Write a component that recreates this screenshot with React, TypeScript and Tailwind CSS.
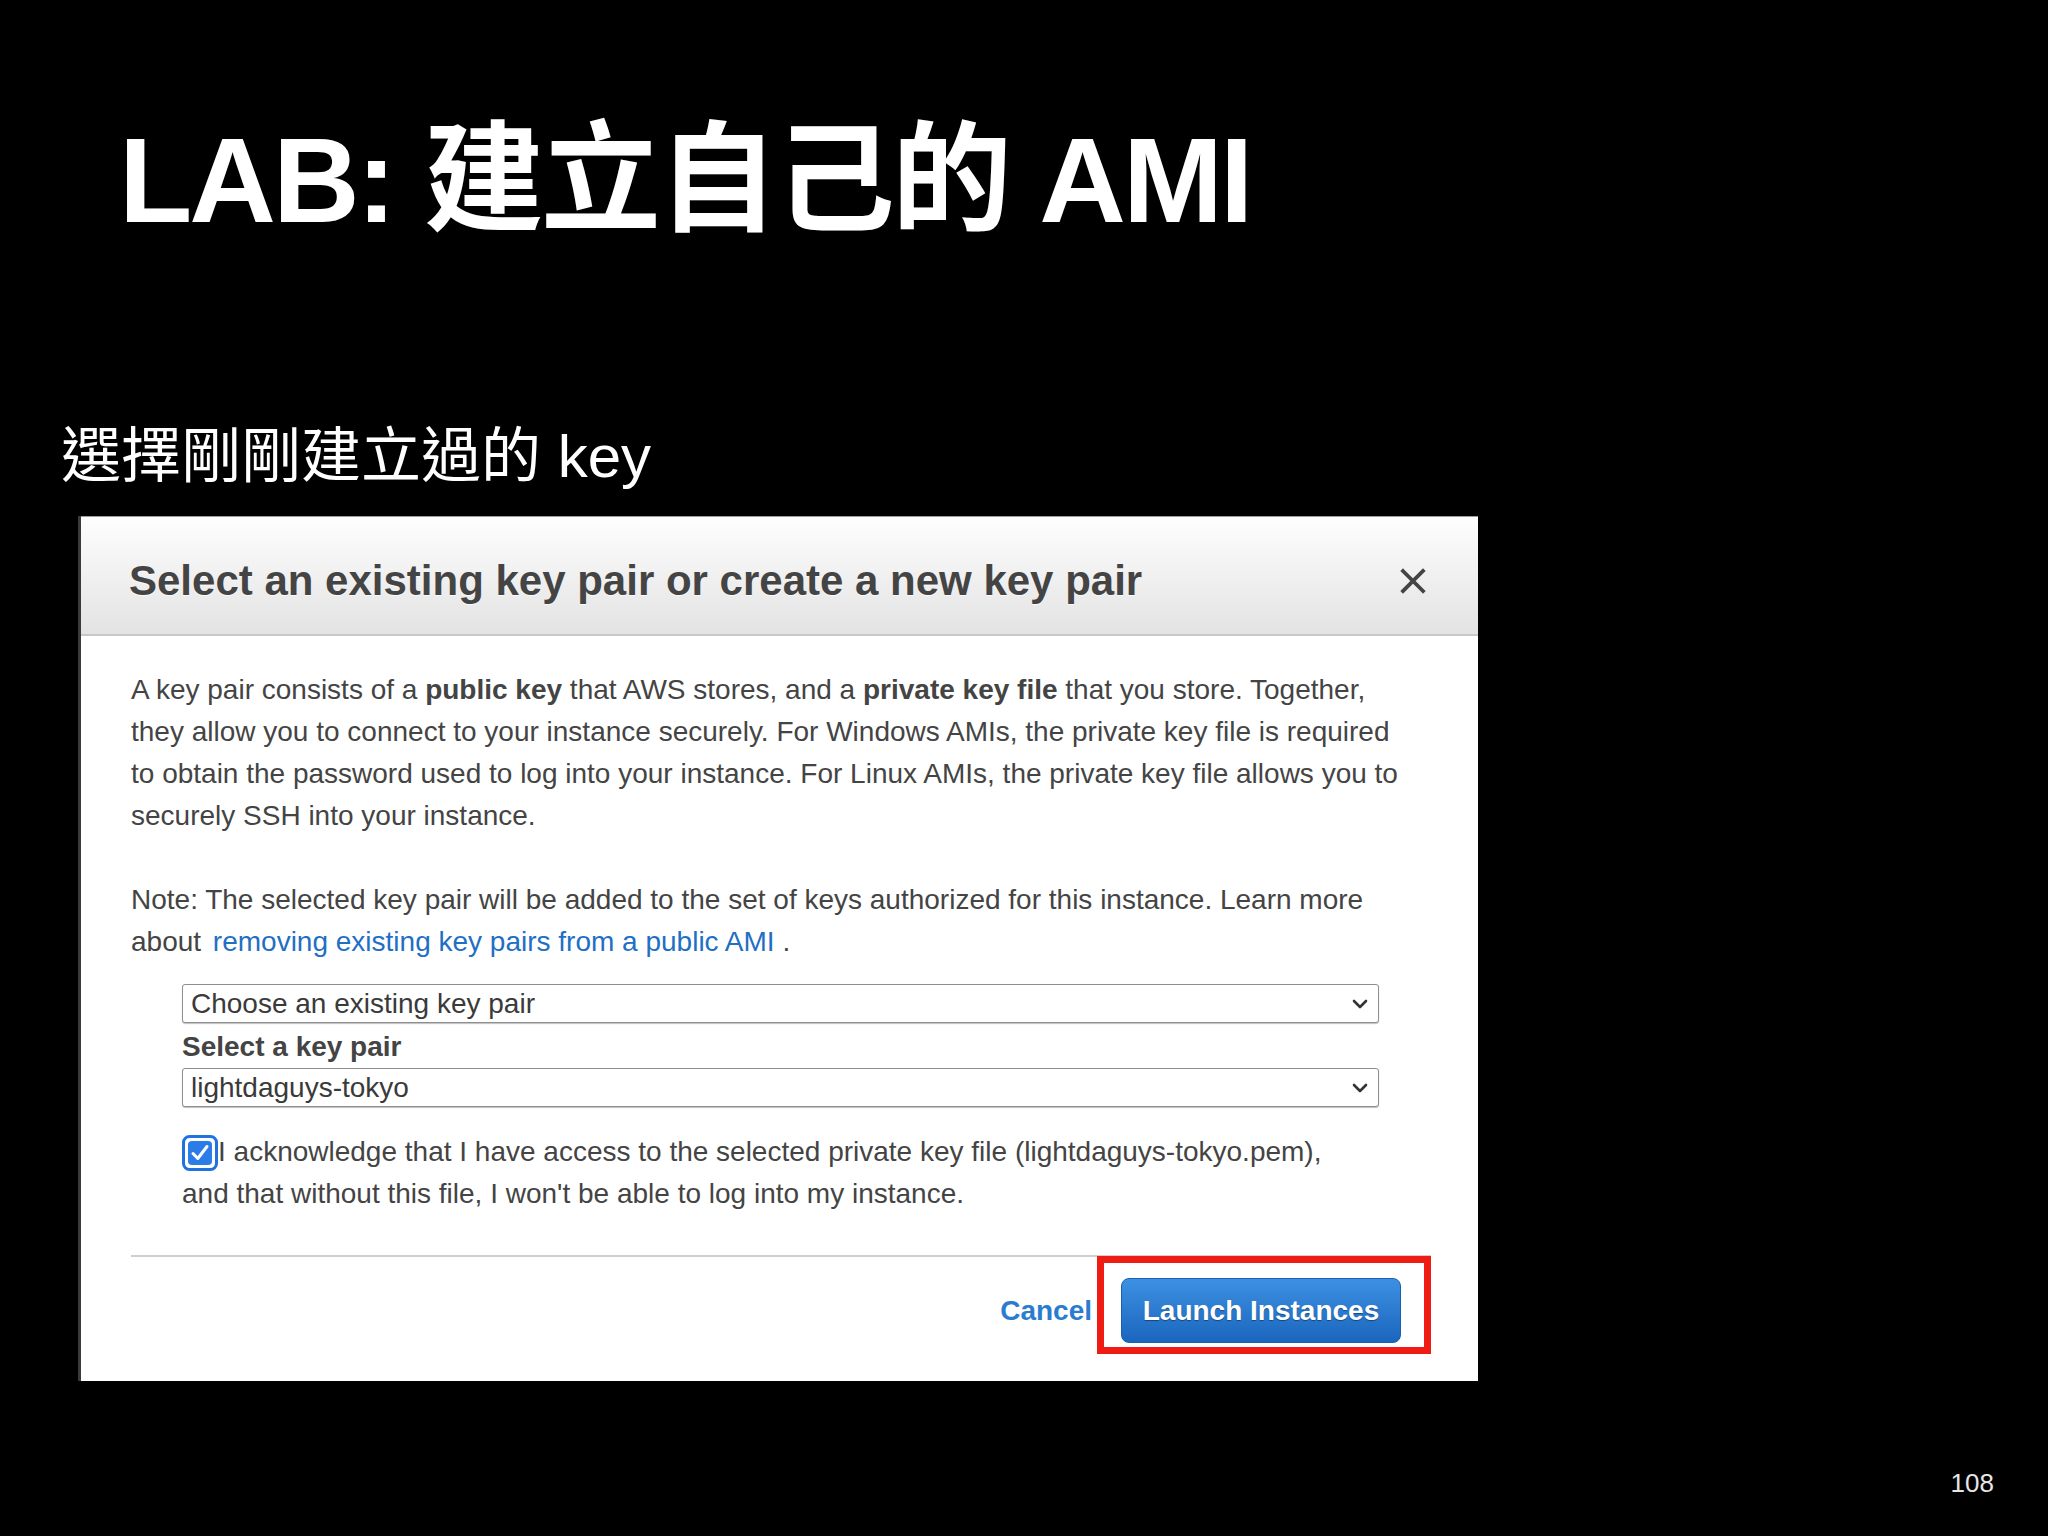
import React from 'react'

const sans = { fontFamily: '"Liberation Sans", "Noto Sans CJK TC", Arial, sans-serif' }

const Chevron = () => (
  <svg width="18" height="12" viewBox="0 0 18 12" className="shrink-0">
    <polyline points="3,3 9,9 15,3" fill="none" stroke="#333" strokeWidth="2.6" strokeLinecap="round" strokeLinejoin="round" />
  </svg>
)

const FakeSelect = ({ value }: { value: string }) => (
  <div className="flex h-[39px] items-center justify-between rounded-[3px] border border-[#8e8e8e] bg-white pl-[8px] pr-[9px] shadow-[0_1px_1px_rgba(0,0,0,0.25)]">
    <span className="text-[28px] leading-none text-[#3a3a3a]">{value}</span>
    <Chevron />
  </div>
)

const CheckBox = () => (
  <svg width="36" height="36" viewBox="0 0 36 36" className="inline-block align-[-10px]">
    <rect x="1.5" y="1.5" width="33" height="33" rx="6" fill="#fff" stroke="#1f72df" strokeWidth="3" />
    <rect x="6" y="6" width="24" height="24" rx="4" fill="#2c7ce8" />
    <path d="M11 18.5 L15.8 23.5 L25 11.5" fill="none" stroke="#fff" strokeWidth="3" strokeLinecap="round" strokeLinejoin="round" />
  </svg>
)

export default function App() {
  return (
    <div className="relative flex h-[1536px] w-[2048px] flex-col overflow-hidden bg-black" style={sans}>
      {/* Slide title */}
      <h1 className="pl-[119px] pt-[120px] text-[120px] font-bold leading-[120px] tracking-[-0.025em] text-white">
        LAB: 建立自己的 AMI
      </h1>

      <p className="mt-[182px] pl-[61px] text-[60px] leading-[70px] text-white">選擇剛剛建立過的 key</p>

      {/* Screenshot of the AWS dialog */}
      <div className="ml-[78px] mt-[24px] flex h-[865px] w-[1400px] flex-col border-l-[3px] border-[#3a3a3a] bg-white">
        <div className="flex h-[120px] items-center justify-between border-t border-b-2 border-t-[#9c9c9c] border-b-[#c8c8c8] bg-linear-to-b from-[#fefefe] to-[#e3e3e3] pl-[48px] pr-[52px] pt-[10px]">
          <h2 className="text-[42px] font-bold text-[#444] [text-shadow:0_1px_0_rgba(255,255,255,0.8)]">
            Select an existing key pair or create a new key pair
          </h2>
          <svg width="26" height="26" viewBox="0 0 26 26">
            <path d="M3 3 L23 23 M23 3 L3 23" stroke="#444" strokeWidth="3.8" strokeLinecap="square" />
          </svg>
        </div>

        <div className="flex flex-1 flex-col pl-[50px] pr-[47px] pt-[33px] text-[28px] leading-[42px] text-[#444]">
          <p>
            A key pair consists of a <b>public key</b> that AWS stores, and a <b>private key file</b> that you store. Together,
            <br />
            they allow you to connect to your instance securely. For Windows AMIs, the private key file is required
            <br />
            to obtain the password used to log into your instance. For Linux AMIs, the private key file allows you to
            <br />
            securely SSH into your instance.
          </p>

          <p className="mt-[42px]">
            Note: The selected key pair will be added to the set of keys authorized for this instance. Learn more
            <br />
            about <a className="ml-[4px] text-[#1f6fc4]">removing existing key pairs from a public AMI</a> .
          </p>

          <div className="ml-[51px] mr-[52px] mt-[21px] flex flex-col">
            <FakeSelect value="Choose an existing key pair" />
            <label className="mt-[3px] font-bold">Select a key pair</label>
            <FakeSelect value="lightdaguys-tokyo" />
            <p className="mt-[24px]">
              <CheckBox />I acknowledge that I have access to the selected private key file (lightdaguys-tokyo.pem),
              <br />
              and that without this file, I won't be able to log into my instance.
            </p>
          </div>

          <div className="mt-[40px] h-[2px] bg-[#cfcfcf]" />

          <div className="mr-[30px] mt-[21px] flex items-center justify-end gap-[29px]">
            <a className="font-bold text-[#2a7cd0]">Cancel</a>
            <div className="relative">
              <button className="flex h-[65px] w-[280px] items-center justify-center rounded-[8px] border border-[#1b5fb3] bg-linear-to-b from-[#3d90e2] to-[#1a66be] font-bold text-white [text-shadow:0_1px_1px_rgba(0,0,0,0.4)]">
                Launch Instances
              </button>
              {/* red annotation frame */}
              <div className="pointer-events-none absolute -bottom-[11px] -left-[24px] -right-[30px] -top-[22px] border-[7px] border-[#ee1c12]" />
            </div>
          </div>
        </div>
      </div>

      <div className="mt-[87px] flex justify-end pr-[54px]">
        <span className="text-[26px] leading-[30px] text-[#e6e6e6]">108</span>
      </div>
    </div>
  )
}
